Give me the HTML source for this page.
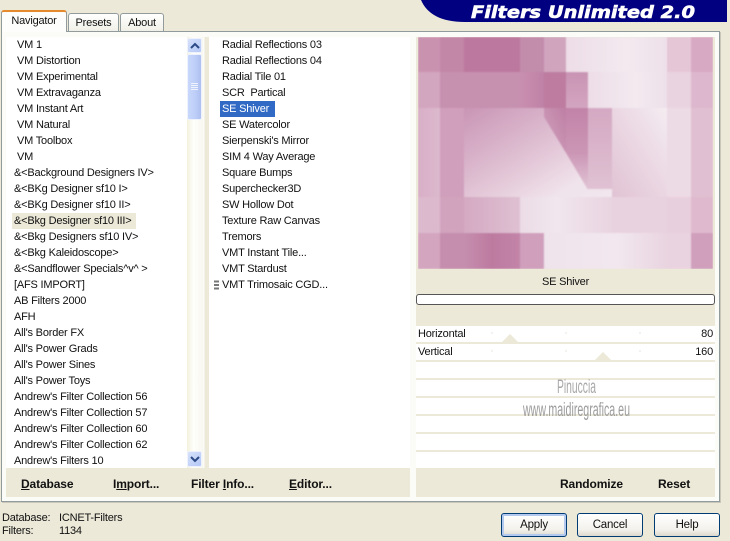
<!DOCTYPE html>
<html><head><meta charset="utf-8">
<style>
html,body{margin:0;padding:0}
body{width:730px;height:541px;position:relative;overflow:hidden;background:#ece9d8;font:11px/16px "Liberation Sans",sans-serif;letter-spacing:-.2px;color:#111}
div,span,svg{position:absolute}
.t{white-space:pre}
.b{font-weight:bold;font-size:12px;letter-spacing:-.12px;white-space:pre;color:#111;line-height:16px}
.btn{top:513px;width:64px;height:22px;border:1px solid #003c74;border-radius:3px;background:linear-gradient(#fff,#f3f2ec 70%,#dcd8ce);text-align:center;line-height:22px;font-size:11.5px;letter-spacing:-.2px}
.row{left:416px;width:299px;height:16px;background:#fff}
</style></head><body>

<!-- tabs -->
<div style="left:68px;top:13px;width:49px;height:18px;background:linear-gradient(#fff,#f0efe6);border:1px solid #919b9c;border-bottom:0;border-radius:3px 3px 0 0;text-align:center;line-height:18px" class="t">Presets</div>
<div style="left:120px;top:13px;width:42px;height:18px;background:linear-gradient(#fff,#f0efe6);border:1px solid #919b9c;border-bottom:0;border-radius:3px 3px 0 0;text-align:center;line-height:18px" class="t">About</div>

<!-- panel -->
<div style="left:1px;top:31px;width:717px;height:469px;background:#fbfbf8;border:1px solid #919b9c;box-shadow:1px 1px 0 #c9c7ba"></div>
<div style="left:1px;top:10px;width:66px;height:22px;background:#fdfdfb;border-top:2px solid #e68b2c;border-radius:3px 3px 0 0;box-sizing:border-box;border-left:1px solid #919b9c;border-right:1px solid #919b9c;text-align:center;line-height:18px" class="t">Navigator</div>

<!-- banner -->
<svg style="left:421px;top:0" width="306" height="22" viewBox="0 0 306 22"><path d="M0 0H306V22H44C20 22 6 14 0 0Z" fill="#000080"/>
<text x="50" y="18" font-family="'DejaVu Sans',sans-serif" font-weight="bold" font-style="italic" font-size="17" fill="#fff" stroke="#fff" stroke-width=".6" letter-spacing="0" textLength="224" lengthAdjust="spacingAndGlyphs">Filters Unlimited 2.0</text></svg>

<!-- columns -->
<div style="left:6px;top:37px;width:181px;height:431px;background:#fff"></div>
<div style="left:187px;top:37px;width:16px;height:431px;background:linear-gradient(90deg,#f3f1dc,#fefefb 40%,#f8f7f0)"></div>
<div style="left:203px;top:37px;width:6px;height:431px;background:linear-gradient(90deg,#fbfbf8 20%,#ece9d8 30%)"></div>
<div style="left:209px;top:37px;width:201px;height:431px;background:#fff"></div>
<div style="left:6px;top:468px;width:404px;height:29px;background:#ece9d8"></div>
<div style="left:416px;top:37px;width:299px;height:460px;background:#ece9d8"></div>

<!-- scrollbar -->
<div style="left:187px;top:38px;width:15px;height:15px;background:linear-gradient(135deg,#d6e1fb,#b4c8f6);border-radius:2px;border:1px solid #eef2fd;box-sizing:border-box"></div>
<svg style="left:187px;top:38px" width="16" height="16"><path d="M4 10L8 6L12 10" fill="none" stroke="#2b4a86" stroke-width="2"/></svg>
<div style="left:187px;top:54px;width:15px;height:66px;background:linear-gradient(90deg,#c9d8fb,#bccdf8 60%,#aebff0);border:1px solid #eef2fd;box-sizing:border-box;border-radius:2px"></div>
<svg style="left:191px;top:82px" width="8" height="9"><path d="M0 1.5H7M0 3.5H7M0 5.5H7M0 7.5H7" stroke="#eef3fe" stroke-width="1"/></svg>
<div style="left:187px;top:451px;width:15px;height:16px;background:linear-gradient(135deg,#d6e1fb,#b4c8f6);border-radius:2px;border:1px solid #eef2fd;box-sizing:border-box"></div>
<svg style="left:187px;top:451px" width="16" height="16"><path d="M4 6L8 10L12 6" fill="none" stroke="#2b4a86" stroke-width="2"/></svg>

<!-- left list -->
<div style="left:12px;top:213px;width:124px;height:16px;background:#ece9d8"></div>
<div class="t" style="left:17px;top:37px">VM 1
VM Distortion
VM Experimental
VM Extravaganza
VM Instant Art
VM Natural
VM Toolbox
VM</div>
<div class="t" style="left:14px;top:165px">&amp;&lt;Background Designers IV&gt;
&amp;&lt;BKg Designer sf10 I&gt;
&amp;&lt;BKg Designer sf10 II&gt;
&amp;&lt;Bkg Designer sf10 III&gt;
&amp;&lt;Bkg Designers sf10 IV&gt;
&amp;&lt;Bkg Kaleidoscope&gt;
&amp;&lt;Sandflower Specials^v^ &gt;
[AFS IMPORT]
AB Filters 2000
AFH
All's Border FX
All's Power Grads
All's Power Sines
All's Power Toys
Andrew's Filter Collection 56
Andrew's Filter Collection 57
Andrew's Filter Collection 60
Andrew's Filter Collection 62
Andrew's Filters 10</div>

<!-- middle list -->
<div style="left:220px;top:101px;width:55px;height:16px;background:#316ac5"></div>
<div class="t" style="left:222px;top:37px">Radial Reflections 03
Radial Reflections 04
Radial Tile 01
SCR  Partical
<span style="position:static;color:#fff">SE Shiver</span>
SE Watercolor
Sierpenski's Mirror
SIM 4 Way Average
Square Bumps
Superchecker3D
SW Hollow Dot
Texture Raw Canvas
Tremors
VMT Instant Tile...
VMT Stardust
VMT Trimosaic CGD...</div>
<svg style="left:214px;top:280px" width="6" height="11"><path d="M0 1.5H5M0 5H5M0 8.5H5" stroke="#777" stroke-width="2"/></svg>

<!-- preview -->
<svg style="left:418px;top:37px" width="295" height="232" viewBox="418 37 295 232">
<defs>
<filter id="s" x="0" y="0" width="1" height="1"><feGaussianBlur stdDeviation=".9"/></filter>
<linearGradient id="a" x1="0" y1="0" x2="1" y2="1"><stop offset="0" stop-color="#c995b5"/><stop offset=".45" stop-color="#dfbfd2"/><stop offset=".8" stop-color="#f0e3eb"/><stop offset="1" stop-color="#f1e6ed"/></linearGradient>
<linearGradient id="b" x1="0" y1="1" x2="1" y2="0"><stop offset="0" stop-color="#e0c3d4"/><stop offset=".5" stop-color="#ead6e2"/><stop offset="1" stop-color="#f4ecf1"/></linearGradient>
<linearGradient id="c" x1="1" y1="0" x2="0" y2="1"><stop offset="0" stop-color="#be7fa4"/><stop offset="1" stop-color="#d2a3bf"/></linearGradient>
<linearGradient id="d" x1="0" y1="0" x2="0" y2="1"><stop offset="0" stop-color="#c283a8"/><stop offset=".55" stop-color="#cb96b5"/><stop offset="1" stop-color="#e2c5d6"/></linearGradient>
<linearGradient id="e" x1="0" y1="0" x2="0" y2="1"><stop offset="0" stop-color="#d4a8c2"/><stop offset="1" stop-color="#e0c1d3"/></linearGradient>
<linearGradient id="f" x1="0" y1="0" x2="1" y2="0"><stop offset="0" stop-color="#d4a9c2"/><stop offset="1" stop-color="#dfc0d2"/></linearGradient>
<linearGradient id="g" x1="0" y1="0" x2="1" y2="0"><stop offset="0" stop-color="#ebdce6"/><stop offset=".4" stop-color="#f1e6ed"/><stop offset="1" stop-color="#e8d4e0"/></linearGradient>
<linearGradient id="h" x1="0" y1="0" x2="1" y2="0"><stop offset="0" stop-color="#eddde7"/><stop offset=".6" stop-color="#f3e9ef"/><stop offset="1" stop-color="#eee0e9"/></linearGradient>
<linearGradient id="i" x1="0" y1="0" x2="0" y2="1"><stop offset="0" stop-color="#c993b3"/><stop offset="1" stop-color="#d3a5c0"/></linearGradient>
<linearGradient id="j" x1="0" y1="0" x2="1" y2="0"><stop offset="0" stop-color="#d8aec7"/><stop offset="1" stop-color="#dcb9cd"/></linearGradient>
<linearGradient id="l" x1="0" y1="0" x2="1" y2="0"><stop offset="0" stop-color="#efe3eb"/><stop offset=".6" stop-color="#f2e7ee"/><stop offset="1" stop-color="#e8d4e0"/></linearGradient>
<linearGradient id="m" x1="0" y1="0" x2="1" y2="0"><stop offset="0" stop-color="#c58eae"/><stop offset=".5" stop-color="#bd7aa0"/><stop offset="1" stop-color="#c284a8"/></linearGradient>
<linearGradient id="n" x1="0" y1="0" x2="1" y2="0"><stop offset="0" stop-color="#c98fb0"/><stop offset="1" stop-color="#bf82a6"/></linearGradient>
</defs>
<g filter="url(#s)">
<rect x="418" y="37" width="295" height="232" fill="#e6d0dd"/>
<rect x="418" y="37" width="22" height="35" fill="#c993b0"/><rect x="440" y="37" width="24" height="35" fill="#c286a6"/><rect x="464" y="37" width="56" height="35" fill="#bc789e"/><rect x="520" y="37" width="24" height="35" fill="#c28cab"/><rect x="544" y="37" width="22" height="35" fill="#d0a4bd"/><rect x="566" y="37" width="101" height="35" fill="url(#h)"/><rect x="667" y="37" width="24" height="35" fill="#e4c6d7"/><rect x="691" y="37" width="22" height="35" fill="#d8a9c3"/>
<rect x="418" y="72" width="22" height="36" fill="#d3a6bf"/><rect x="440" y="72" width="81" height="36" fill="#c690af"/><rect x="520" y="72" width="24" height="36" fill="url(#n)"/><rect x="544" y="72" width="22" height="45" fill="#bd7ba0"/><rect x="566" y="72" width="22" height="36" fill="url(#i)"/><rect x="588" y="72" width="79" height="36" fill="url(#h)"/><rect x="667" y="72" width="24" height="36" fill="#e9d3e0"/><rect x="691" y="72" width="22" height="36" fill="#ddb7cd"/>
<rect x="418" y="108" width="22" height="89" fill="url(#j)"/><rect x="440" y="108" width="24" height="89" fill="#d09fbb"/>
<rect x="464" y="108" width="148" height="89" fill="url(#a)"/>
<path d="M544 108H566V153L544 117Z" fill="url(#c)"/>
<path d="M566 108H588V190L566 153Z" fill="url(#d)"/>
<rect x="588" y="108" width="24" height="81" fill="url(#e)"/>
<rect x="612" y="108" width="55" height="89" fill="url(#b)"/><rect x="667" y="108" width="24" height="89" fill="#ecdae5"/><rect x="691" y="108" width="22" height="89" fill="#e1bfd2"/>
<rect x="418" y="197" width="22" height="36" fill="#dcb9cd"/><rect x="440" y="197" width="24" height="36" fill="#d2a3bd"/><rect x="464" y="197" width="56" height="36" fill="url(#f)"/><rect x="520" y="197" width="92" height="36" fill="url(#g)"/><rect x="612" y="197" width="55" height="36" fill="#e8d2df"/><rect x="667" y="197" width="24" height="36" fill="#e8cfdd"/><rect x="691" y="197" width="22" height="36" fill="#dfbace"/>
<rect x="418" y="233" width="22" height="36" fill="#d3a5bf"/><rect x="440" y="233" width="24" height="36" fill="#c58eae"/><rect x="464" y="233" width="56" height="36" fill="url(#m)"/><rect x="520" y="233" width="24" height="36" fill="#d09fbc"/><rect x="544" y="233" width="123" height="36" fill="url(#l)"/><rect x="667" y="233" width="24" height="36" fill="#e9d3e0"/><rect x="691" y="233" width="22" height="36" fill="#d09fbc"/>
</g>
</svg>

<div class="t" style="left:416px;top:274px;width:299px;text-align:center">SE Shiver</div>
<div style="left:416px;top:294px;width:299px;height:11px;background:#fff;border:1px solid #555;box-sizing:border-box;border-radius:3px"></div>

<!-- slider rows -->
<div class="row" style="top:326px"></div><div class="row" style="top:344px"></div><div class="row" style="top:362px"></div><div class="row" style="top:380px"></div><div class="row" style="top:398px"></div><div class="row" style="top:416px"></div><div class="row" style="top:434px"></div><div class="row" style="top:452px"></div>
<svg style="left:416px;top:326px" width="299" height="36"><path d="M76 6V8M150 6V8M224 6V8M76 24V26M150 24V26M224 24V26" stroke="#e8e6dc"/><path d="M86 16L94 8L102 16Z M179 34L187 26L195 34Z" fill="#ece9d8"/></svg>
<div class="t" style="left:418px;top:326px">Horizontal</div>
<div class="t" style="left:418px;top:344px">Vertical</div>
<div class="t" style="left:613px;top:326px;width:100px;text-align:right">80</div>
<div class="t" style="left:613px;top:344px;width:100px;text-align:right">160</div>

<!-- watermark -->
<svg style="left:516px;top:372px" width="120" height="50"><text x="41" y="21" font-family="'Liberation Sans',sans-serif" font-size="19" letter-spacing="0" fill="#a8a8a8" textLength="39" lengthAdjust="spacingAndGlyphs">Pinuccia</text><text x="7" y="44" font-family="'Liberation Sans',sans-serif" font-size="19" letter-spacing="0" fill="#9c9c9c" textLength="107" lengthAdjust="spacingAndGlyphs">www.maidiregrafica.eu</text></svg>

<!-- bottom buttons -->
<div class="b" style="left:21px;top:476px"><span style="position:static;text-decoration:underline">D</span>atabase</div>
<div class="b" style="left:113px;top:476px">I<span style="position:static;text-decoration:underline">m</span>port...</div>
<div class="b" style="left:191px;top:476px">Filter <span style="position:static;text-decoration:underline">I</span>nfo...</div>
<div class="b" style="left:289px;top:476px"><span style="position:static;text-decoration:underline">E</span>ditor...</div>
<div class="b" style="left:560px;top:476px">Randomize</div>
<div class="b" style="left:658px;top:476px">Reset</div>

<!-- status -->
<div class="t" style="left:2px;top:512px;line-height:13px">Database:
Filters:</div>
<div class="t" style="left:59px;top:512px;line-height:13px">ICNET-Filters
1134</div>

<div class="btn" style="left:501px;box-shadow:inset 0 0 0 2px #b4c9ee">Apply</div>
<div class="btn" style="left:577px">Cancel</div>
<div class="btn" style="left:654px">Help</div>
</body></html>
